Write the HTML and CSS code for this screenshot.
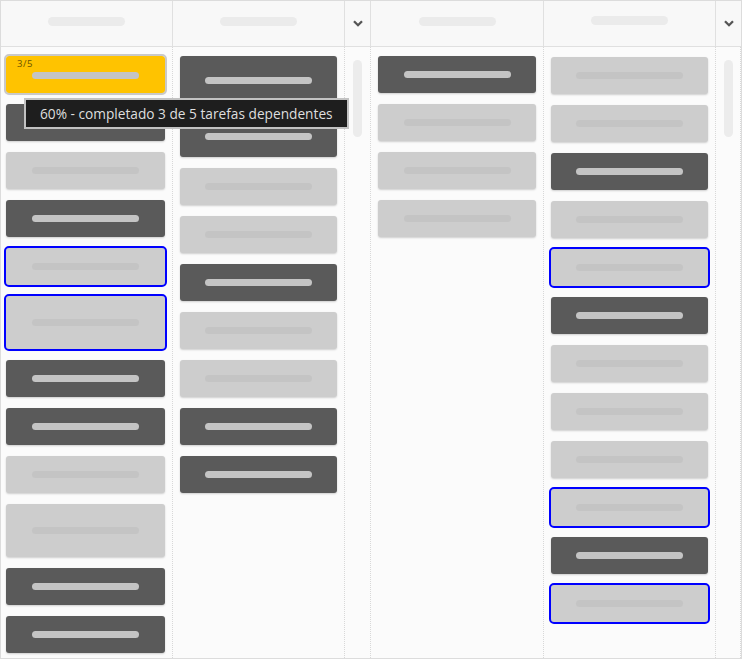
FILE: index.html
```html
<!DOCTYPE html>
<html lang="pt">

<head>
    <meta charset="UTF-8">
    <meta name="viewport" content="width=device-width, initial-scale=1.0">
    <title>Quadro de tarefas</title>
    <link rel="stylesheet" href="styles.css">
</head>

<body>
    <div class="board">
        <!-- header row -->
        <div class="head"><span class="head-pill"></span></div>
        <div class="head"><span class="head-pill"></span></div>
        <div class="head head-toggle">
            <svg width="10" height="7" viewBox="0 0 10 7"><path d="M1 1.2 L5 5.2 L9 1.2" fill="none" stroke="#555" stroke-width="2.3"/></svg>
        </div>
        <div class="head"><span class="head-pill"></span></div>
        <div class="head"><span class="head-pill head-pill-up"></span></div>
        <div class="head head-toggle head-last">
            <svg width="10" height="7" viewBox="0 0 10 7"><path d="M1 1.2 L5 5.2 L9 1.2" fill="none" stroke="#555" stroke-width="2.3"/></svg>
        </div>

        <!-- lanes -->
        <div class="lane lane-first">
            <div class="card card-progress"><span class="count">3/5</span><span class="bar"></span></div>
            <div class="card card-dark"><span class="bar"></span></div>
            <div class="card"><span class="bar"></span></div>
            <div class="card card-dark"><span class="bar"></span></div>
            <div class="card card-selected"><span class="bar"></span></div>
            <div class="card card-selected card-tall"><span class="bar"></span></div>
            <div class="card card-dark"><span class="bar"></span></div>
            <div class="card card-dark"><span class="bar"></span></div>
            <div class="card"><span class="bar"></span></div>
            <div class="card card-tall"><span class="bar"></span></div>
            <div class="card card-dark"><span class="bar"></span></div>
            <div class="card card-dark"><span class="bar"></span></div>
        </div>
        <div class="lane">
            <div class="card card-dark card-big"><span class="bar"></span></div>
            <div class="card card-dark card-mid"><span class="bar"></span></div>
            <div class="card"><span class="bar"></span></div>
            <div class="card"><span class="bar"></span></div>
            <div class="card card-dark"><span class="bar"></span></div>
            <div class="card"><span class="bar"></span></div>
            <div class="card"><span class="bar"></span></div>
            <div class="card card-dark"><span class="bar"></span></div>
            <div class="card card-dark"><span class="bar"></span></div>
        </div>
        <div class="track"><span class="thumb"></span></div>
        <div class="lane">
            <div class="card card-dark"><span class="bar"></span></div>
            <div class="card"><span class="bar"></span></div>
            <div class="card"><span class="bar"></span></div>
            <div class="card"><span class="bar"></span></div>
        </div>
        <div class="lane lane-shift">
            <div class="card"><span class="bar"></span></div>
            <div class="card"><span class="bar"></span></div>
            <div class="card card-dark"><span class="bar"></span></div>
            <div class="card"><span class="bar"></span></div>
            <div class="card card-selected"><span class="bar"></span></div>
            <div class="card card-dark"><span class="bar"></span></div>
            <div class="card"><span class="bar"></span></div>
            <div class="card"><span class="bar"></span></div>
            <div class="card"><span class="bar"></span></div>
            <div class="card card-selected"><span class="bar"></span></div>
            <div class="card card-dark"><span class="bar"></span></div>
            <div class="card card-selected"><span class="bar"></span></div>
        </div>
        <div class="track track-last"><span class="thumb"></span></div>

        <div class="tooltip">60% - completado 3 de 5 tarefas dependentes</div>
    </div>
</body>

</html>
```

FILE: styles.css
```css
body {
    margin: 0;
    font-family: "Open Sans", "Noto Sans", sans-serif;
    background: #fff;
}

.board {
    position: relative;
    width: 742px;
    height: 659px;
    box-sizing: border-box;
    border: 1px solid #dcdcdc;
    display: grid;
    grid-template-columns: 172px 172px 26px 173px 172px 25px;
    grid-template-rows: 46px 1fr;
    overflow: hidden;
    background: #fbfbfb;
}

.head {
    box-sizing: border-box;
    background: #f8f8f8;
    border-right: 1px solid #e0e0e0;
    border-bottom: 1px solid #e0e0e0;
    display: flex;
    justify-content: center;
    align-items: flex-start;
}

.head-pill {
    display: block;
    width: 77px;
    height: 9px;
    margin-top: 16px;
    border-radius: 5px;
    background: #ebebeb;
}

.head-pill-up {
    margin-top: 15px;
}

.head-toggle {
    align-items: center;
    padding-bottom: 0;
}

.head-toggle svg {
    display: block;
}

.head-last,
.track-last {
    border-right: none;
}

.lane {
    box-sizing: border-box;
    padding: 9px 7px 0 7px;
    border-right: 1px dotted #d8d8d8;
    display: flex;
    flex-direction: column;
    gap: 11px;
    overflow: hidden;
}

.lane-first {
    padding-left: 5px;
}

.lane-shift {
    padding-top: 10px;
}

.track {
    box-sizing: border-box;
    border-right: 1px dotted #d8d8d8;
    display: flex;
    justify-content: center;
    padding-top: 13px;
}

.thumb {
    display: block;
    width: 9px;
    height: 77px;
    border-radius: 5px;
    background: #ececec;
}

.card {
    flex: none;
    position: relative;
    height: 37px;
    border-radius: 3px;
    background: #cdcdcd;
    box-shadow: 0 1px 2px rgba(0, 0, 0, 0.18);
    display: flex;
    justify-content: center;
    align-items: center;
}

.card-dark {
    background: #5a5a5a;
}

.card-tall {
    height: 53px;
}

.card-big {
    height: 48px;
}

.card-mid {
    height: 42px;
}

.card-selected {
    outline: 2px solid #0000ff;
}

.card-progress {
    background: #ffc300;
    outline: 2px solid #c9c9c9;
}

.bar {
    display: block;
    width: 107px;
    height: 7px;
    border-radius: 4px;
    background: #c4c4c4;
}

.card-progress .bar {
    margin-top: 1px;
}

.count {
    position: absolute;
    left: 11px;
    top: 1px;
    font-size: 9.5px;
    letter-spacing: 0.5px;
    color: #6a5400;
}

.tooltip {
    position: absolute;
    left: 23px;
    top: 97px;
    height: 31px;
    box-sizing: border-box;
    padding: 0 14px;
    display: flex;
    align-items: center;
    background: #1e1e1e;
    border: 2px solid #c2c2c2;
    color: #dedede;
    font-size: 13.7px;
    white-space: nowrap;
}
```
